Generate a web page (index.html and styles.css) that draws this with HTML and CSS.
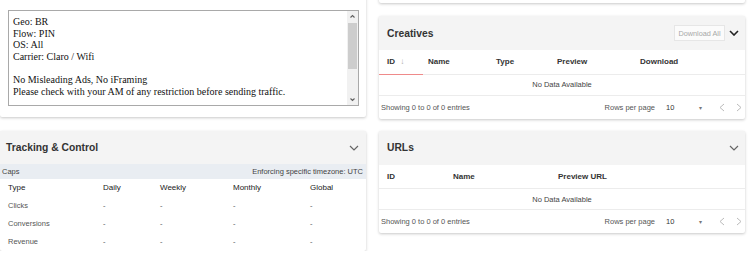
FILE: index.html
```html
<!DOCTYPE html>
<html lang="en">
<head>
    <meta charset="UTF-8">
    <meta name="viewport" content="width=device-width, initial-scale=1.0">
    <title>Offer Details</title>
    <link rel="stylesheet" href="styles.css">
</head>
<body>
    <div class="page">
        <div class="column">
            <section class="card notes-card">
                <div class="notes">
                    <div class="notes-text">Geo: BR<br>Flow: PIN<br>OS: All<br>Carrier: Claro / Wifi<br><br>No Misleading Ads, No iFraming<br>Please check with your AM of any restriction before sending traffic.</div>
                    <div class="scrollbar">
                        <svg class="sb-btn" width="11" height="11" viewBox="0 0 11 11"><polyline points="3.5,6.5 5.5,4.5 7.5,6.5"/></svg>
                        <span class="sb-thumb"></span>
                        <span class="sb-track"></span>
                        <svg class="sb-btn" width="11" height="11" viewBox="0 0 11 11"><polyline points="3.5,4.5 5.5,6.5 7.5,4.5"/></svg>
                    </div>
                </div>
            </section>

            <section class="card">
                <header class="card-head">
                    <h2>Tracking &amp; Control</h2>
                    <svg class="chevron light" width="10" height="6" viewBox="0 0 10 6"><polyline points="1,1 5,5 9,1"/></svg>
                </header>
                <div class="caps-bar">
                    <span>Caps</span>
                    <span>Enforcing specific timezone: UTC</span>
                </div>
                <table class="caps-table">
                    <thead>
                        <tr><th>Type</th><th>Daily</th><th>Weekly</th><th>Monthly</th><th>Global</th></tr>
                    </thead>
                    <tbody>
                        <tr><td>Clicks</td><td>-</td><td>-</td><td>-</td><td>-</td></tr>
                        <tr><td>Conversions</td><td>-</td><td>-</td><td>-</td><td>-</td></tr>
                        <tr><td>Revenue</td><td>-</td><td>-</td><td>-</td><td>-</td></tr>
                    </tbody>
                </table>
            </section>
        </div>

        <div class="column">
            <div class="card card-stub"></div>

            <section class="card">
                <header class="card-head">
                    <h2>Creatives</h2>
                    <div class="head-actions">
                        <button class="btn-light">Download All</button>
                        <svg class="chevron" width="10" height="6" viewBox="0 0 10 6"><polyline points="1,1 5,5 9,1"/></svg>
                    </div>
                </header>
                <table class="data-table creatives">
                    <thead>
                        <tr>
                            <th class="sorted">ID <span class="sort-arrow">&#8595;</span></th>
                            <th>Name</th>
                            <th>Type</th>
                            <th>Preview</th>
                            <th>Download</th>
                        </tr>
                    </thead>
                    <tbody>
                        <tr><td class="empty" colspan="5">No Data Available</td></tr>
                    </tbody>
                </table>
                <footer class="table-foot">
                    <span>Showing 0 to 0 of 0 entries</span>
                    <div class="pager">
                        <span>Rows per page</span>
                        <span class="rows-select">10 <span class="caret">&#9662;</span></span>
                        <svg class="pg" width="6" height="9" viewBox="0 0 6 9"><polyline points="5,1 1,4.5 5,8"/></svg>
                        <svg class="pg" width="6" height="9" viewBox="0 0 6 9"><polyline points="1,1 5,4.5 1,8"/></svg>
                    </div>
                </footer>
            </section>

            <section class="card">
                <header class="card-head">
                    <h2>URLs</h2>
                    <svg class="chevron light" width="10" height="6" viewBox="0 0 10 6"><polyline points="1,1 5,5 9,1"/></svg>
                </header>
                <table class="data-table urls">
                    <thead>
                        <tr><th>ID</th><th>Name</th><th>Preview URL</th></tr>
                    </thead>
                    <tbody>
                        <tr><td class="empty" colspan="3">No Data Available</td></tr>
                    </tbody>
                </table>
                <footer class="table-foot">
                    <span>Showing 0 to 0 of 0 entries</span>
                    <div class="pager">
                        <span>Rows per page</span>
                        <span class="rows-select">10 <span class="caret">&#9662;</span></span>
                        <svg class="pg" width="6" height="9" viewBox="0 0 6 9"><polyline points="5,1 1,4.5 5,8"/></svg>
                        <svg class="pg" width="6" height="9" viewBox="0 0 6 9"><polyline points="1,1 5,4.5 1,8"/></svg>
                    </div>
                </footer>
            </section>
        </div>
    </div>
</body>
</html>
```

FILE: styles.css
```css
body {
    margin: 0;
    font-family: "Liberation Sans", Arial, sans-serif;
    background-color: #ffffff;
    color: #555;
    overflow: hidden;
}
.page {
    display: flex;
    gap: 13px;
    align-items: flex-start;
}
.column {
    width: 366px;
    display: flex;
    flex-direction: column;
}
.card {
    background-color: #ffffff;
    box-shadow: 0 1px 3px rgba(0,0,0,0.22);
    border-radius: 2px;
}
.card + .card {
    margin-top: 12px;
}
.card-stub {
    height: 8px;
    margin-top: -5px;
}
.card-stub + .card {
    margin-top: 13px;
}
.notes-card {
    margin-top: -6px;
    padding: 16px 7px 11px 8px;
}
.notes-card + .card {
    margin-top: 14px;
}
.notes {
    display: flex;
    height: 94px;
    border: 1px solid #a9a9a9;
}
.notes-text {
    flex: 1;
    padding: 5px 4px;
    font-family: "Liberation Serif", "Times New Roman", serif;
    font-size: 10px;
    line-height: 11.6px;
    color: #111;
}
.scrollbar {
    width: 11px;
    display: flex;
    flex-direction: column;
    background-color: #f1f1f1;
}
.sb-btn {
    display: block;
    fill: none;
    stroke: #606060;
    stroke-width: 1.1;
}
.sb-thumb {
    height: 46px;
    margin: 1px 1px 0;
    background-color: #cdcdcd;
}
.sb-track {
    flex: 1;
}
.card-head {
    height: 34px;
    display: flex;
    align-items: center;
    justify-content: space-between;
    padding: 0 6px 0 8px;
    background-color: #f4f4f4;
}
.card-head h2 {
    margin: 0;
    font-size: 10.3px;
    font-weight: bold;
    color: #333;
}
.column:first-child .card-head {
    height: 33px;
    padding: 0 7px 0 6px;
}
.head-actions {
    display: flex;
    align-items: center;
    gap: 4px;
}
.btn-light {
    height: 16px;
    width: 51px;
    padding: 0;
    border: 1px solid #e6e6e6;
    background-color: #fbfbfb;
    font-family: inherit;
    font-size: 7.3px;
    color: #a8a8a8;
}
.chevron {
    fill: none;
    stroke: #222;
    stroke-width: 1.6;
}
.chevron.light {
    stroke: #666;
    stroke-width: 1.2;
}
.caps-bar {
    height: 15px;
    display: flex;
    align-items: center;
    justify-content: space-between;
    padding: 0 3px 0 2px;
    background-color: #e9edf2;
    font-size: 7.5px;
    color: #444;
}
.caps-table,
.data-table {
    width: 100%;
    border-collapse: collapse;
    table-layout: fixed;
}
.caps-table th,
.caps-table td,
.data-table th,
.data-table td {
    box-sizing: border-box;
    padding: 0;
}
.caps-table {
    font-size: 7.5px;
}
.caps-table th {
    height: 17px;
    text-align: left;
    font-weight: normal;
    font-size: 8px;
    color: #222;
}
.caps-table td {
    height: 18px;
    color: #555;
}
.caps-table tr:last-child td {
    height: 19px;
}
.caps-table th:first-child,
.caps-table td:first-child {
    padding-left: 8px;
}
.caps-table th:nth-child(1) { width: 103px; }
.caps-table th:nth-child(2) { width: 57px; }
.caps-table th:nth-child(3) { width: 73px; }
.caps-table th:nth-child(4) { width: 77px; }
.data-table th {
    height: 24px;
    text-align: left;
    font-size: 8px;
    font-weight: bold;
    color: #333;
    border-bottom: 1px solid #ececec;
}
.data-table th:first-child {
    padding-left: 8px;
}
.data-table th.sorted {
    border-bottom: 1px solid #ef8a8a;
}
.sort-arrow {
    margin-left: 3px;
    font-weight: normal;
    color: #aaa;
}
.creatives th:nth-child(1) { width: 44px; }
.creatives th:nth-child(2) { width: 73px; padding-left: 5px; }
.creatives th:nth-child(3) { width: 61px; }
.creatives th:nth-child(4) { width: 83px; }
.urls th:nth-child(1) { width: 74px; }
.urls th:nth-child(2) { width: 105px; }
.empty {
    height: 21px;
    text-align: center;
    font-size: 7.5px;
    color: #444;
    border-bottom: 1px solid #ececec;
}
.table-foot {
    height: 23px;
    display: flex;
    align-items: center;
    justify-content: space-between;
    padding: 0 3px 0 2px;
    font-size: 7.5px;
    color: #555;
}
.pager {
    display: flex;
    align-items: center;
}
.rows-select {
    margin-left: 11px;
    width: 42px;
    color: #333;
}
.caret {
    margin-left: 23px;
    font-size: 6px;
    color: #777;
}
.pg {
    margin-left: 11px;
    fill: none;
    stroke: #bbb;
    stroke-width: 1;
}
```
